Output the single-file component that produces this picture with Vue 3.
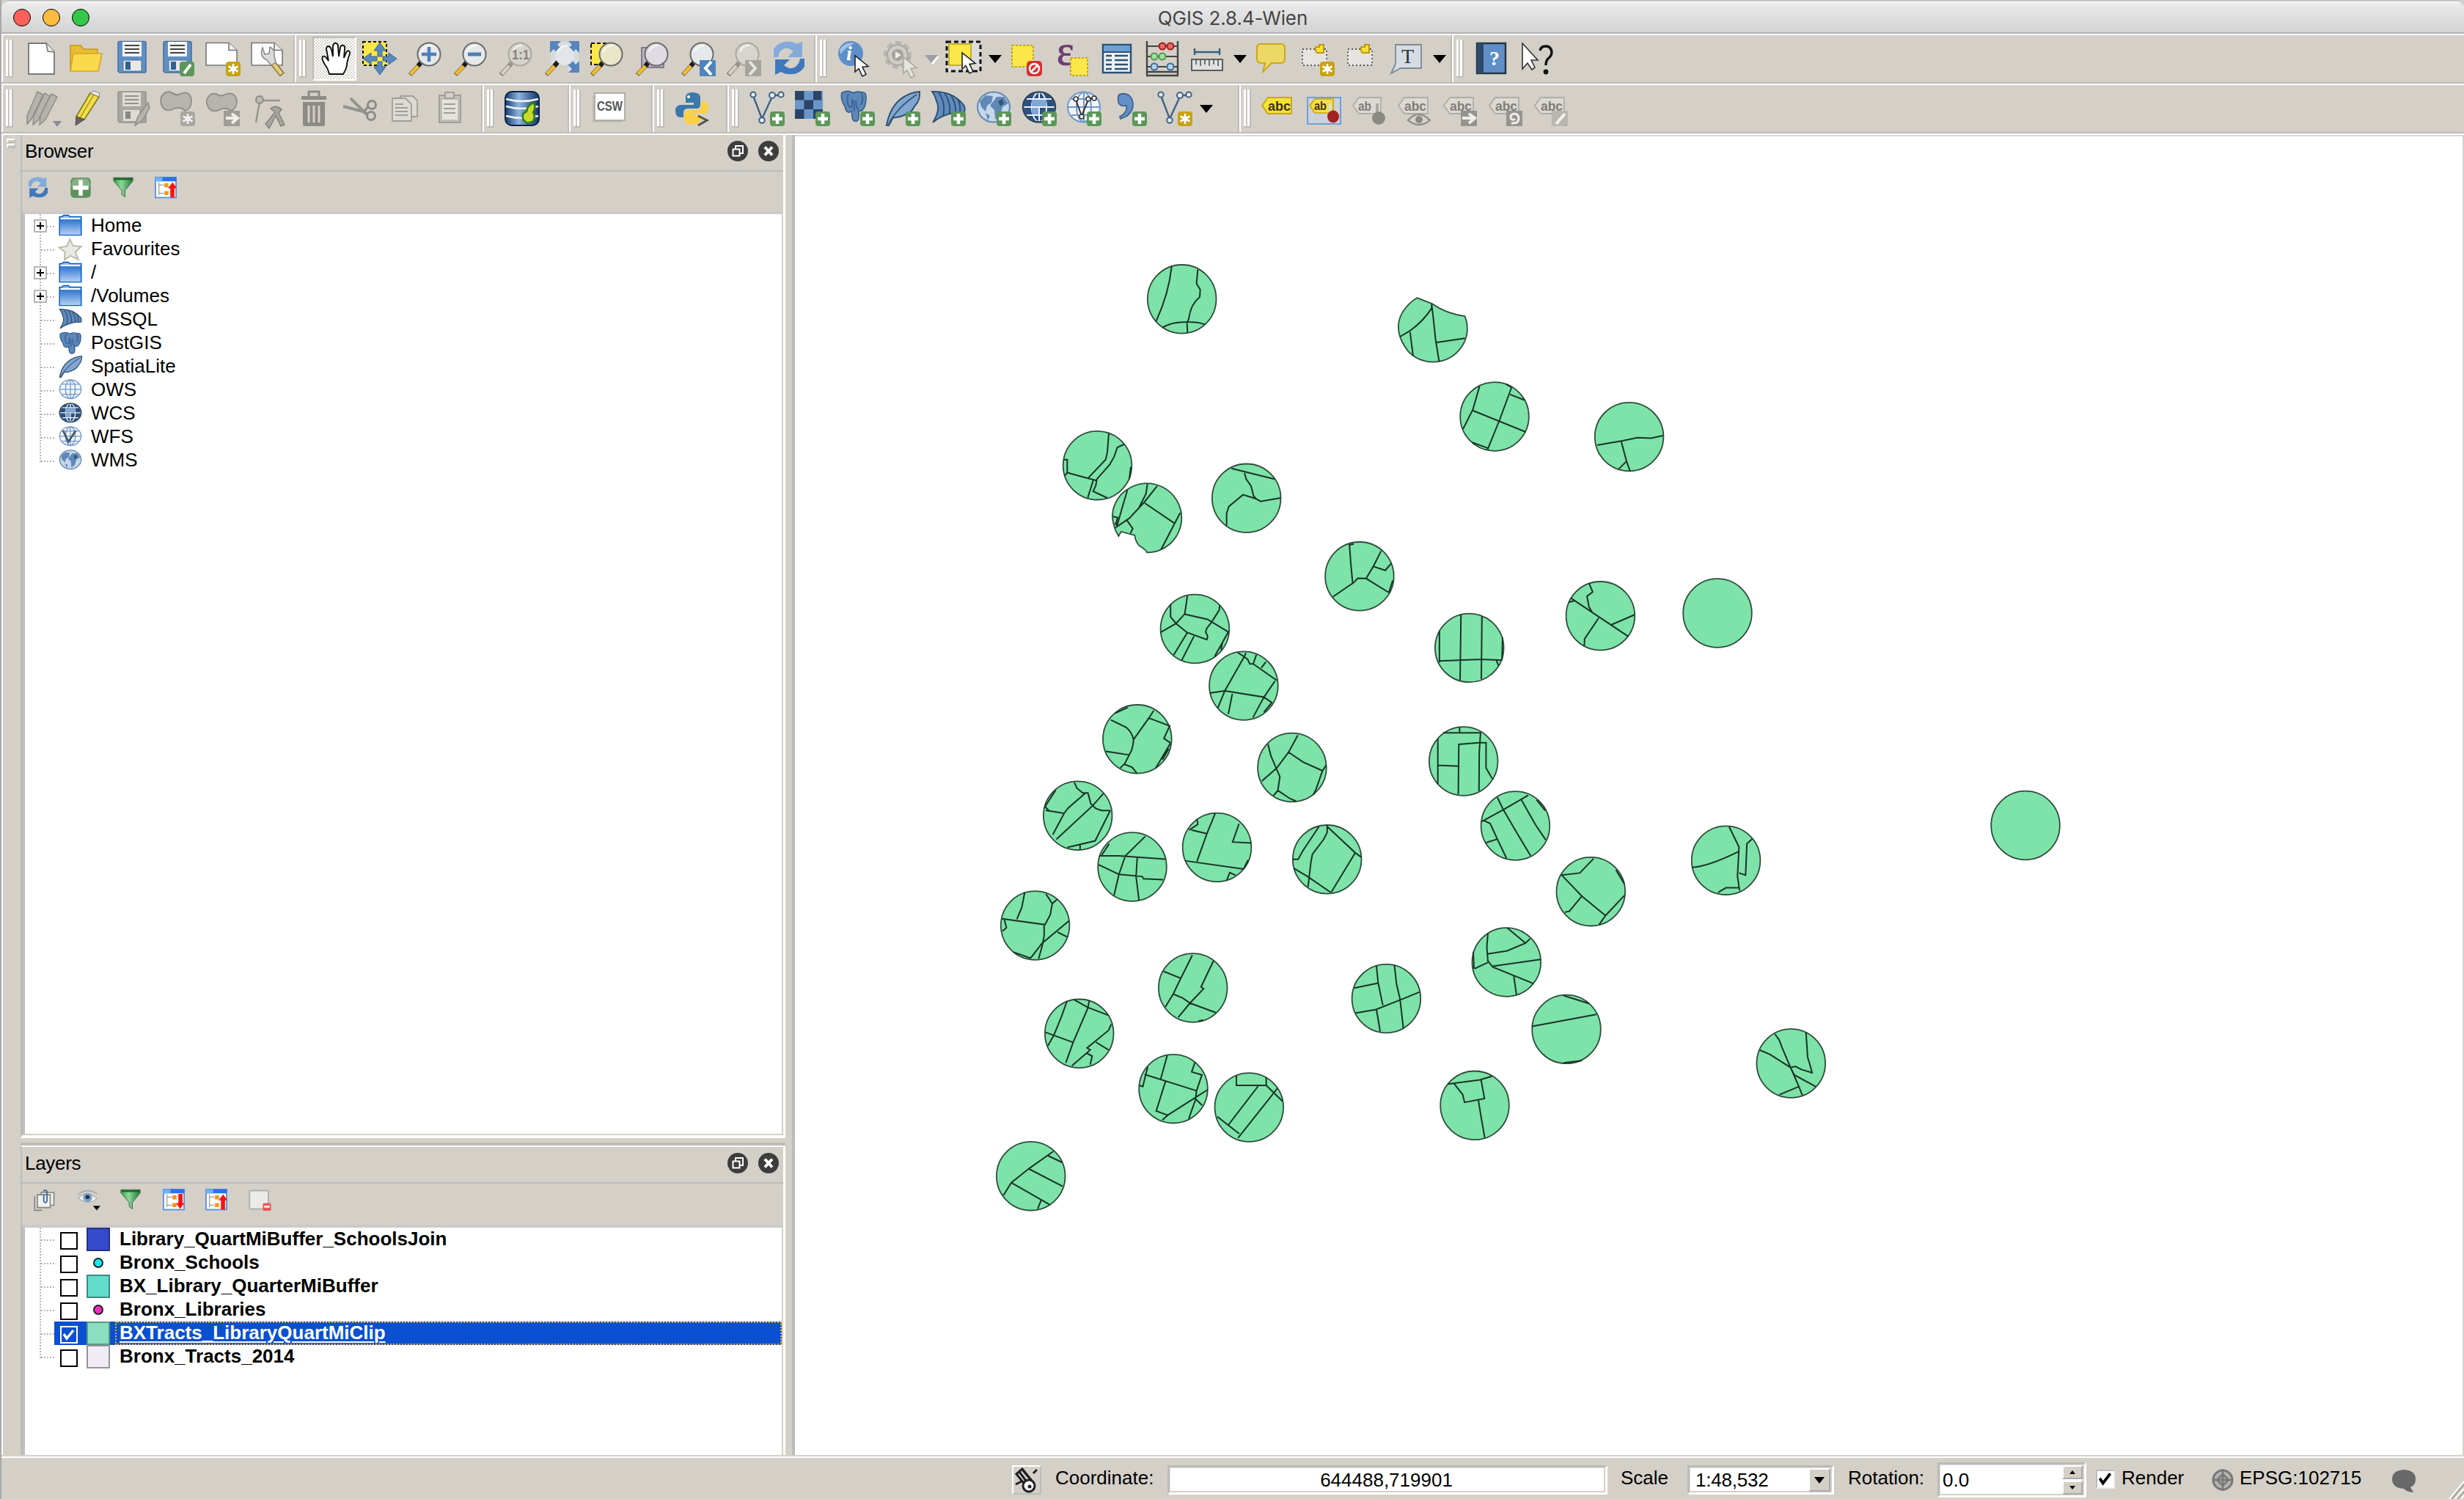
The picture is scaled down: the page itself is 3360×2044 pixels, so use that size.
<script setup>
const plus = '<rect x="28" y="28" width="20" height="20" rx="4" fill="#5c9658"/><path d="M38 31v14M31 38h14" stroke="#fff" stroke-width="4.5"/>'
const star = '<rect x="28" y="28" width="20" height="20" rx="4" fill="#c9a20c"/><path d="M38 31v14M31.5 34.5l13 7M31.5 41.5l13-7" stroke="#fff" stroke-width="2.6"/><circle cx="38" cy="38" r="3.6" fill="#fff"/>'
const grayStar = '<rect x="28" y="28" width="20" height="20" rx="4" fill="#a9a6a0"/><path d="M38 31v14M31.5 34.5l13 7M31.5 41.5l13-7" stroke="#eee" stroke-width="2.6"/><circle cx="38" cy="38" r="3.4" fill="#eee"/>'
const page = '<path d="M1 2.500h31l11 10v20.500h-42z" fill="#fff" stroke="#777" stroke-width="1.600"/><path d="M32 2.500v10h11" fill="#eee" stroke="#777" stroke-width="1.600"/>'
const floppy = '<path d="M5 3q0-2.500 2.500-2.500h33q2.500 0 2.500 2.500v38q0 2-2 2h-34l-2-2z" fill="#5f8fc6" stroke="#49709c" stroke-width="1.600"/><rect x="11" y="1" width="26" height="20" fill="#f4f4f4"/><path d="M14 6h20M14 11h20M14 16h20" stroke="#444" stroke-width="1.800"/><rect x="12" y="26" width="25" height="15" rx="1" fill="#e8e8e8" stroke="#49709c"/><rect x="15" y="28" width="7" height="11" fill="#2f6291"/>'
const grayFloppy = '<path d="M5 3q0-2 2-2h34q2 0 2 2v38q0 2-2 2h-34l-2-2z" fill="#aaa7a1" stroke="#95928c" stroke-width="1.600"/><rect x="11" y="2" width="25" height="19" fill="#dedbd5"/><path d="M14 7h19M14 12h19M14 17h19" stroke="#95928c" stroke-width="1.800"/><rect x="12" y="26" width="22" height="15" fill="#dedbd5"/><rect x="15" y="28" width="7" height="10" fill="#8a8782"/><path d="M46 16l-14 19-4 12 10-6 10-18z" fill="#b5b2ac" stroke="#8f8c86" stroke-width="1.500"/>'
const lens = (fill = '#e6e8ea', ring = '#6b6b6b', grip = '#f0bd2d', tip = '#1c1c1c') =>
  `<path d="M17 31L3 46" stroke="#6b5b2e" stroke-width="6" opacity=".8"/><path d="M17 31L4 45" stroke="${grip}" stroke-width="4.500"/><path d="M19 28l-5 6" stroke="${tip}" stroke-width="6"/><circle cx="29" cy="18" r="15.500" fill="${fill}" stroke="${ring}" stroke-width="2"/><path d="M19 15q3-9 13-9" fill="none" stroke="#fff" stroke-width="2" opacity=".8"/>`
const cursor = (x, y, fill = '#fff', line = '#222') => `<path transform="translate(${x} ${y})" d="M0 0v22l5-4.500 5 10.500 5-2.500-5-10 8-1z" fill="${fill}" stroke="${line}" stroke-width="1.600"/>`
const nodes = '<path d="M6 9L17 38 30 10M33 6h9" fill="none" stroke="#3f6286" stroke-width="2.400"/><g fill="#e8edf2" stroke="#3f6286" stroke-width="2"><circle cx="5" cy="5" r="3.600"/><circle cx="17" cy="40" r="3.800"/><circle cx="31" cy="6" r="4"/><circle cx="43" cy="5" r="3.600"/></g>'
const tag = '<path d="M1 20L9 9h32v22H9z" fill="#f5e13c" stroke="#c5a60c" stroke-width="1.800"/><text x="9" y="27" font-size="18" font-weight="bold" textLength="31" lengthAdjust="spacingAndGlyphs" fill="#3b3206">abc</text>'
const grayTag = '<path d="M1 20L9 9h32v22H9z" fill="#dcd9d3" stroke="#b0ada7" stroke-width="1.800"/><text x="9" y="27" font-size="18" font-weight="bold" textLength="30" lengthAdjust="spacingAndGlyphs" fill="#7f7c77">abc</text>'
const sync = (a, b) => `<path d="M3 22V11Q12-3 31 2l3 2 8-3v21H22l8-8Q20 6 13 13q-3 3-4 9z" fill="${a}"/><path d="M45 24v11Q36 49 17 44l-4-2-8 4V25h20l-8 8q10 8 17 1 4-4 5-10z" fill="${b}"/>`
const grid = '<g fill="none" stroke-width="2"><ellipse cx="24" cy="22" rx="10" ry="20"/><path d="M24 2v40M3 22h42M7 11h34M7 33h34"/><ellipse cx="24" cy="22" rx="22" ry="20.500"/></g>'
const sail = '<path d="M2 1Q30 0 45 19q3 5 1 10Q22 28 3 43q11-18 5-29Q6 6 2 1z" fill="#5e8abd" stroke="#2f4d70" stroke-width="1.800"/><path d="M11 2q10 14 6 33M19 3q9 13 7 29M28 6q7 12 6 24M37 11q4 8 3 18" fill="none" stroke="#2f4d70" stroke-width="1.800"/>'
const elephant = '<path d="M3 3Q12-2 20 3q6-3 13-1 8-1 7 9 0 12-6 18l-5 1v10q-1 5-5 5t-5-6l-1-9-4 2q-5-1-6-9Q1 13 3 3z" fill="#5b88bb" stroke="#3b5e88" stroke-width="1.800"/><path d="M13 4q-3 12 1 19l5 1V12M33 3q4 10-1 18M21 14q2 8 1 16M25 14q-1 10 4 15" fill="none" stroke="#3b5e88" stroke-width="1.800"/>'
const feather = '<path d="M2 47Q6 24 20 12 32 2 47 1q1 12-7 20-4 9-14 12-8 4-15 3L5 47z" fill="#80a7d3" stroke="#34516f" stroke-width="2"/><path d="M5 45Q16 23 43 5" fill="none" stroke="#34516f" stroke-width="1.600"/>'
const globeLand = '<ellipse cx="24" cy="22" rx="22" ry="20.500" fill="#c6d7ea" stroke="#6387ae" stroke-width="2"/><path d="M5 14l8-8 10 1-2 9-6 4-2 8-6-6zM28 8l10 0 6 9-8 5-3 12-7 5-1-13-6-6zM13 30l6 4-3 6z" fill="#6089b8"/><path d="M30 14l6-3 2 6-5 4z" fill="#35557a"/>'
const globeDark = `<ellipse cx="24" cy="22" rx="22" ry="20.500" fill="#2c4f7c"/><g stroke="#eef3f8">${grid}</g><path d="M14 12h20v9H14zM14 23h9v9h-9z" fill="#7fa6d4"/><ellipse cx="24" cy="22" rx="22" ry="20.500" fill="none" stroke="#2c4660" stroke-width="2.500"/>`
const globeLight = `<ellipse cx="24" cy="22" rx="22" ry="20.500" fill="#f2f6fb"/><g stroke="#7198c8">${grid}</g>`
const funnel = '<defs><linearGradient id="fg"><stop offset="0" stop-color="#2f9a48"/><stop offset=".4" stop-color="#8ed89a"/><stop offset="1" stop-color="#1e7a34"/></linearGradient></defs><path d="M3 2h42v7L28 30v14l-7-5v-9L3 9z" fill="url(#fg)" stroke="#4b6350" stroke-width="1.500"/><path d="M4 3h40v4H4z" fill="#176a2a"/>'
const treeWin = (arrow) => `<rect x="1.500" y="1.500" width="45" height="44" fill="#fff" stroke="#5e8fdc" stroke-width="3"/><path d="M1 1h46v9H1z" fill="#2a72ea"/><path d="M1 1h16v9H1z" fill="#6fb2f6"/><path d="M9 12v28M10 18h10M10 36h10" stroke="#aaa" stroke-width="2.500"/><path d="M21 14h9v9h-9zM21 31h9v9h-9z" fill="#f5951f"/>${arrow}`

const icons = {
  newDoc: '<path d="M7 3h24l11 12v30H7z" fill="#fff" stroke="#777" stroke-width="1.800"/><path d="M31 3l2 11 9 1" fill="#eee" stroke="#777" stroke-width="1.600"/>',
  folder: '<path d="M2 40V6h14l4 5h19v8" fill="#e9bd33" stroke="#c49a1f" stroke-width="1.600"/><path d="M2 41L6 17h39l-5 24z" fill="#fcd84c" stroke="#d1a728" stroke-width="1.600"/>',
  save: floppy,
  saveAs: floppy + '<rect x="27" y="28" width="20" height="20" rx="4" fill="#5c9658"/><path d="M42 32L33 44" stroke="#fff" stroke-width="4"/>',
  composer: page + star,
  composers: page + '<path d="M31 31l12 15" stroke="#8b7833" stroke-width="8"/><path d="M31 31l11 14" stroke="#e2cb7c" stroke-width="5"/><path d="M16 9q-5 12 6 17l6 7 6-4-2-9q1-9-6-12l-1 9-6 1z" fill="#dcdcdc" stroke="#888" stroke-width="1.500"/>',
  hand: '<path transform="translate(2 0)" d="M15 45Q13 37 9 32 4 24 6 21q3-2 8 6L11 11q0-4 3-4 3 1 4 5l2 9V7q1-5 4-4 3 0 3 5l1 13 2-12q1-4 4-3 3 1 2 5l-1 12 3-7q2-4 4-2 2 1 0 6-3 8-3 13-1 6-5 12z" fill="#fff" stroke="#111" stroke-width="1.900"/>',
  panSel: '<rect x="1" y="1" width="32" height="32" fill="#fbe848" stroke="#111" stroke-width="2" stroke-dasharray="4 3"/><g fill="#5b89bd" stroke="#3f658f"><path d="M24 2l8 11h-5v8h-6v-8h-5zM24 46l8-11h-5v-7h-6v7h-5zM1 24l11-8v5h8v6h-8v5zM47 24l-11-8v5h-8v6h8v5z"/></g>',
  zoomIn: lens() + '<path d="M29 8v20M19 18h20" stroke="#4d80b6" stroke-width="4.500"/>',
  zoomOut: lens() + '<path d="M20 18h18" stroke="#4d80b6" stroke-width="5"/>',
  zoomNative: lens('#d6d3cc', '#aaa79f', '#d5d2cb', '#99968f') + '<text x="18" y="25" font-size="19" font-weight="bold" textLength="24" lengthAdjust="spacingAndGlyphs" fill="#85827b">1:1</text>',
  zoomFull: '<path d="M9 1h38v40h-14V29H9z" fill="#d6dbe1"/><g fill="#5585bb"><path d="M8 0h15l-5 5 7 7-6 6-6-7-5 5zM48 0H33l5 5-7 7 6 6 6-7 5 5zM48 43H33l5-5-7-7 6-6 6 7 5-5z"/></g>' + lens('#e3e6e9').replace(/<circle[^>]*>/, '<circle cx="28" cy="20" r="13" fill="#e3e6e9"/>'),
  zoomSel: '<rect x="2" y="3" width="22" height="29" fill="#fbe848" stroke="#111" stroke-width="2" stroke-dasharray="5 3"/>' + lens('#e9e6c8'),
  zoomLayer: '<rect x="9" y="9" width="30" height="27" fill="#bdb3c2" stroke="#827888" stroke-width="2"/>' + lens('#dfdbe3'),
  zoomLast: lens() + '<rect x="26" y="26" width="22" height="22" fill="#4f84bd"/><path d="M42 28l-8 9 8 9" fill="none" stroke="#fff" stroke-width="4"/>',
  zoomNext: lens('#d8d5ce', '#aaa79f', '#d5d2cb', '#99968f') + '<rect x="26" y="26" width="22" height="22" fill="#a7a49e"/><path d="M32 28l8 9-8 9" fill="none" stroke="#e6e4df" stroke-width="4"/>',
  refresh: sync('#83abda', '#3f78bd'),
  identify: '<circle cx="18" cy="17" r="17" fill="#5d8fca"/><path d="M3 12Q10 0 24 3q-12 4-20 15z" fill="#a4c3e6"/><text x="12" y="26" font-size="28" font-style="italic" font-weight="bold" font-family="Liberation Serif" fill="#fff">i</text>' + cursor(24, 20),
  action: '<circle cx="20" cy="19" r="16" fill="none" stroke="#b9b6af" stroke-width="6" stroke-dasharray="8 4"/><circle cx="20" cy="19" r="14" fill="#cfccc5" stroke="#a9a69f" stroke-width="2"/><circle cx="20" cy="19" r="8" fill="#a5a29b"/><path d="M17 14l8 5-8 5z" fill="#eee"/>' + cursor(28, 22, '#e7e4de', '#aaa79f'),
  select: '<rect x="1" y="1" width="46" height="40" fill="#dcdcdc" stroke="#111" stroke-width="3" stroke-dasharray="6 4"/><rect x="4" y="4" width="30" height="29" fill="#fbe848" stroke="#b59c14" stroke-width="1.500"/>' + cursor(22, 16),
  deselect: '<rect x="3" y="6" width="29" height="29" fill="#fbe848" stroke="#c5a313" stroke-width="2" stroke-dasharray="3 2"/><rect x="23" y="27" width="21" height="21" rx="5" fill="#dc2f2f"/><circle cx="33.500" cy="37.500" r="6.500" fill="none" stroke="#fff" stroke-width="2.500"/><path d="M38 33l-9 9" stroke="#fff" stroke-width="2.500"/>',
  expr: '<text x="2" y="32" font-size="56" font-family="Liberation Serif" fill="#6f3d72" stroke="#6f3d72">ε</text><rect x="21" y="23" width="23" height="24" fill="#fbe848" stroke="#c5a313" stroke-width="2" stroke-dasharray="3 2"/>',
  table: '<rect x="4" y="5" width="38" height="38" fill="#eef2f6" stroke="#2c5273" stroke-width="2.500"/><path d="M4 5h38v10H4z" fill="#6da0d2" stroke="#2c5273" stroke-width="2"/><path d="M8 20h8M20 20h18M8 26h8M20 26h18M8 32h8M20 32h18M8 38h8M20 38h18" stroke="#2c5273" stroke-width="2.500"/>',
  abacus: '<path d="M2 0v46M44 0v46M1 42h44M1 47h44" stroke="#444" stroke-width="2.400"/><path d="M2 7h42M2 21h42M2 35h42" stroke="#444" stroke-width="2"/><g stroke-width="2"><g fill="#e56a6a" stroke="#a31d1d"><circle cx="23" cy="7" r="4.500"/><circle cx="34" cy="7" r="4.500"/></g><g fill="#a6dda6" stroke="#4c9a4c"><circle cx="12" cy="21" r="4.500"/><circle cx="23" cy="21" r="4.500"/></g><g fill="#b4d2ec" stroke="#3a6a95"><circle cx="12" cy="35" r="4.500"/><circle cx="34" cy="35" r="4.500"/></g></g>',
  measure: '<path d="M5 10v9M39 10v9M5 15h34" stroke="#31617f" stroke-width="2.400"/><rect x="1" y="25" width="42" height="15" fill="#dfe2e0" stroke="#5a5e5c" stroke-width="2"/><path d="M7 26v6M13 26v8M19 26v6M25 26v8M31 26v6M37 26v8" stroke="#555" stroke-width="1.600"/>',
  tip: '<path d="M7 4h29q5 0 5 6v14q0 6-6 6H23L11 42l3-12H9q-6 0-6-6V10q0-6 4-6z" fill="#ecd965" stroke="#c9a721" stroke-width="2"/>',
  newMark: '<rect x="4" y="11" width="33" height="22" fill="#e6e4e0" stroke="#555" stroke-width="1.800" stroke-dasharray="2 3"/><path d="M22 8h5V5h6v11h-9q-3-2-2-8z" fill="#fbe038" stroke="#bb980e" stroke-width="2"/>' + star,
  mark: '<rect x="4" y="11" width="33" height="22" fill="#e6e4e0" stroke="#555" stroke-width="1.800" stroke-dasharray="2 3"/><path d="M22 8h5V5h6v11h-9q-3-2-2-8z" fill="#fbe038" stroke="#bb980e" stroke-width="2"/>',
  annot: '<path d="M7 5h35v32H14L1 44l6-13z" fill="#d5dce4" stroke="#7f8993" stroke-width="1.800"/><text x="15" y="30" font-size="28" font-family="Liberation Serif" fill="#333">T</text>',
  help: '<rect x="4" y="3" width="39" height="41" fill="#5f8fc6" stroke="#25323f" stroke-width="2.400"/><path d="M4 3h9v41H4z" fill="#2d4a6b"/><text x="21" y="33" font-size="28" font-family="Liberation Serif" font-weight="bold" fill="#fff">?</text>',
  what: '<path d="M4 3v35l7-8 6 9 4-3-5-10h9z" fill="#fff" stroke="#333" stroke-width="1.600"/><path d="M28 13q1-6 8-6t8 8q0 5-5 9-3 3-3 9" fill="none" stroke="#111" stroke-width="3.400"/><circle cx="36" cy="42" r="3.400" fill="#111"/>',
  pencils: '<g stroke="#8f8c86" stroke-width="1.400" fill="#b6b3ad"><path d="M19 1l8 4L11 38 5 45l0-11z"/><path d="M29 3l7 4L20 40l-7 6 1-12z"/><path d="M38 4l8 4-16 31-8 7 1-12z"/></g><path d="M40 41h12l-6 8z" fill="#8e8c93"/>',
  pencil: '<path d="M29 3l12 5-20 31-11-4z" fill="#f0de4a" stroke="#8c7c1c" stroke-width="1.800"/><path d="M34 5L15 37" stroke="#b19c22" stroke-width="1.500"/><path d="M29 3l5-3 8 3-1 5z" fill="#e8e8e8" stroke="#888"/><path d="M10 35l11 4-12 8z" fill="#666" stroke="#444"/>',
  saveEdits: grayFloppy,
  addFeat: '<path d="M2 8q5-9 14-6 6 6 14 1 12-3 13 10 0 12-9 14-5-6-14-3-12 6-17-3-3-6-1-13z" fill="#b7b4ae" stroke="#8f8c86" stroke-width="1.800"/>' + grayStar,
  moveFeat: '<path d="M2 12q4-10 13-8 6 5 14 0 12-3 14 10-1 12-9 13-5-5-13-2-12 6-17-3-3-5-2-10z" fill="#b7b4ae" stroke="#8f8c86" stroke-width="1.800"/><rect x="25" y="27" width="22" height="21" fill="#a09d97"/><path d="M28 37h14M36 31l8 6-8 7" stroke="#f2f0ec" stroke-width="4" fill="none"/>',
  nodeTool: '<path d="M7 43L12 15M15 13h25" stroke="#97948e" stroke-width="2.400"/><circle cx="12" cy="12" r="5" fill="#bbb8b2" stroke="#8f8c86" stroke-width="2"/><path d="M20 45l13-16-6-5q7-6 15 1l-4 5 8 16-5 2-7-14-9 17z" fill="#a8a59f" stroke="#86837d" stroke-width="1.500"/>',
  trash: '<path d="M7 7h34v5H7z" fill="#8e8b85"/><path d="M17 7V1h14v6" fill="none" stroke="#8e8b85" stroke-width="3"/><path d="M9 15h30v31q0 2-3 2H12q-3 0-3-2z" fill="#8e8b85"/><path d="M17 20v23M24 20v23M31 20v23" stroke="#d4d0c8" stroke-width="3"/>',
  cut: '<path d="M2 21l31 8M12 10l22 22" stroke="#97948e" stroke-width="4"/><circle cx="41" cy="19" r="5.500" fill="none" stroke="#8e8b85" stroke-width="3"/><circle cx="40" cy="34" r="5.500" fill="none" stroke="#8e8b85" stroke-width="3"/><path d="M36 21l-6 8M30 29l6 3" stroke="#8e8b85" stroke-width="3"/>',
  copy: '<g fill="#dedbd5" stroke="#a19e98" stroke-width="1.800"><path d="M18 7h17l6 6v22H18z"/><path d="M7 10h18l8 8v23H7z"/></g><path d="M11 18h11M11 23h17M11 28h17M11 33h17" stroke="#a19e98" stroke-width="2"/>',
  paste: '<rect x="9" y="6" width="29" height="37" fill="#c4c1ba" stroke="#a19e98" stroke-width="2"/><rect x="12" y="11" width="23" height="29" fill="#e6e3de" stroke="#aaa"/><path d="M17 2h12v8H17z" fill="#d4d0c8" stroke="#a19e98" stroke-width="2"/><path d="M15 18h16M15 24h16M15 30h16" stroke="#a19e98" stroke-width="2"/>',
  db: '<defs><linearGradient id="db"><stop offset="0" stop-color="#153a6e"/><stop offset=".4" stop-color="#8db5de"/><stop offset="1" stop-color="#123263"/></linearGradient></defs><rect x="1" y="1" width="46" height="46" rx="9" fill="url(#db)" stroke="#0b2145" stroke-width="2"/><path d="M2 11q22 6 44 0M2 21q22 6 44 0M2 34q22 6 44 0" fill="none" stroke="#eef4fa" stroke-width="2.500"/><path d="M40 16q-9 3-10 12-8 3-4 12l5 4 7-2q5-5 1-13 4-5 1-13z" fill="#c8d92b" stroke="#2c7d22" stroke-width="2.500"/>',
  csw: '<rect x="2" y="7" width="40" height="36" fill="#c1beb7"/><rect x="5" y="3" width="41" height="37" fill="#fff" stroke="#a5a29c" stroke-width="1.600"/><text x="8" y="27" font-size="19" font-weight="bold" textLength="35" lengthAdjust="spacingAndGlyphs" fill="#555">CSW</text>',
  python: '<path d="M24 2q-10 0-9 8v6h11v3H9Q1 19 1 27q0 9 7 9h4v-6q0-6 6-6h12q5 0 5-6v-9q0-7-11-7z" fill="#3b78ab"/><circle cx="19" cy="8" r="2" fill="#fff"/><path d="M25 46q10 0 10-8v-5H24v-2h16q6-1 6-8 0-9-7-9h-3v6q0 6-6 6H19q-6 0-6 6v7q0 7 12 7z" fill="#fbd043"/><path d="M32 34l12 6-12 7" fill="none" stroke="#555" stroke-width="3"/>',
  addVector: nodes + plus,
  addRaster: '<g fill="#2a4467"><path d="M0 0h38v38H0z"/></g><path d="M12.500 0H25v12.500H12.500zM38 0H36V12h2zM0 12.500h12.500V25H0zM25 12.500h13V25H25zM12.500 25H25v13H12.500z" fill="#6a97cb"/>' + plus,
  addPg: `<g transform="scale(.9 .92)">${elephant}</g>` + plus, addSl: feather + plus, addMs: sail + plus,
  addWms: globeLand + plus, addWcs: globeDark + plus,
  addWfs: globeLight + '<path d="M13 12l8 22 9-22M33 10h6" fill="none" stroke="#333" stroke-width="2"/><g fill="#fff" stroke="#333" stroke-width="1.600"><circle cx="13" cy="11" r="3"/><circle cx="21" cy="35" r="3"/><circle cx="30" cy="11" r="3"/><circle cx="38" cy="10" r="3"/></g>' + plus,
  addCsv: '<path d="M10 5Q21 1 27 10q6 14-6 24l-9 4-1-3q11-6 9-15-9 2-11-5-1-6 1-10z" fill="#6290c6" stroke="#40648d" stroke-width="1.800"/>' + plus,
  newVector: nodes + star,
  label: tag,
  labelPin: '<rect x="1" y="9" width="45" height="36" fill="#cdd2d9" stroke="#6f9fd8" stroke-width="2"/><path d="M4 20l7-9h25v19H11z" fill="#f5e13c" stroke="#c5a60c" stroke-width="1.600"/><text x="10" y="26" font-size="17" font-weight="bold" textLength="17" lengthAdjust="spacingAndGlyphs" fill="#3b3206">ab</text><path d="M32 18v12" stroke="#ddd" stroke-width="4"/><ellipse cx="36" cy="35" rx="8" ry="8.500" fill="#a32121"/>',
  labelPinG: '<path d="M1 20L9 9h30v22H9z" fill="#dcd9d3" stroke="#b0ada7" stroke-width="1.800"/><text x="8" y="27" font-size="18" font-weight="bold" textLength="18" lengthAdjust="spacingAndGlyphs" fill="#7f7c77">ab</text><path d="M34 17v14" stroke="#aaa79f" stroke-width="4"/><ellipse cx="36" cy="37" rx="9" ry="9" fill="#8c8984"/>',
  labelShow: grayTag + '<path d="M14 40q14-16 30 0-15 12-30 0z" fill="#d6d3cd" stroke="#8c8984" stroke-width="2.200"/><circle cx="29" cy="39" r="5" fill="#8c8984"/>',
  labelMove: grayTag + '<rect x="24" y="27" width="22" height="21" fill="#97948e"/><path d="M26 37h15M35 31l8 6-8 7" stroke="#eee" stroke-width="4" fill="none"/>',
  labelTurn: grayTag + '<rect x="24" y="27" width="22" height="21" fill="#97948e"/><path d="M31 44q10 1 10-7-1-6-6-6-6 1-5 6 3 4 6 1" stroke="#eee" stroke-width="3" fill="none"/>',
  labelEdit: grayTag + '<rect x="24" y="27" width="22" height="21" fill="#b9b6b0"/><path d="M42 31L30 45" stroke="#f4f2ee" stroke-width="4"/>',
  add: '<rect x="2" y="2" width="44" height="44" rx="8" fill="#5c915c"/><path d="M4 14Q6 4 14 4h20q8 0 10 10v8H4z" fill="#86b086"/><path d="M24 7v34M7 24h34" stroke="#fff" stroke-width="9"/>',
  funnel,
  collapse: treeWin('<path d="M39 12l9 13h-5v20h-9V25h-5z" fill="#f11"/>'),
  expand: treeWin('<path d="M38 44l9-13h-4V11h-9v20h-5z" fill="#f11"/>'),
  group: '<g fill="#f1f1ef" stroke="#80837e" stroke-width="2.500"><path d="M2 16v31h16" fill="none"/><path d="M16 8h28v28H16z"/><path d="M8 13h28v28H8z"/></g><path d="M22 13v14q3 7 7 0V6q-4-7-8 0" fill="none" stroke="#3e68a5" stroke-width="3"/>',
  eye: '<path d="M2 20q20-18 42 1-20 17-42-1z" fill="#f0f0ee" stroke="#aaa" stroke-width="2"/><path d="M3 12Q22-3 44 11" fill="none" stroke="#aaa" stroke-width="2.500"/><circle cx="23" cy="19" r="10" fill="#7da0ca"/><circle cx="23" cy="18" r="4.500" fill="#20364f"/><path d="M35 37h16l-8 10z" fill="#000"/>',
  remove: '<rect x="2" y="4" width="41" height="40" rx="2" fill="#ebebe8" stroke="#b0afab" stroke-width="3"/><rect x="31" y="31" width="18" height="17" rx="3" fill="#e55"/><path d="M34 39h12" stroke="#fff" stroke-width="4"/>',
  dir: '<defs><linearGradient id="dg" x2="0" y2="1"><stop offset="0" stop-color="#2f74cf"/><stop offset="1" stop-color="#b3cff2"/></linearGradient></defs><path d="M2 4h5l3-3h10l3 3h23v40H2z" fill="#9dc0ee" stroke="#0a5fc4" stroke-width="2.600"/><path d="M4 8h40" stroke="#fff" stroke-width="3"/><path d="M3 10h42v33H3z" fill="url(#dg)"/>',
  fav: '<path d="M23 2l6 14 17 2-12 12 6 16-16-8-12 9 1-17L1 20l16-3z" fill="#e9eae2" stroke="#b9bba6" stroke-width="3"/>',
  mssql: sail, postgis: `<g transform="scale(1.130 1.040)">${elephant}</g>`, spatialite: feather, ows: globeLight, wcs: globeDark,
  wfs: globeLight + '<path d="M9 10l11 24L35 10" fill="none" stroke="#445566" stroke-width="4"/>', wms: globeLand,
}

const row1 = [
  { w: 400, items: ['newDoc', 'folder', 'save', 'saveAs', 'composer', 'composers'] },
  { w: 710, items: ['hand', 'panSel', 'zoomIn', 'zoomOut', 'zoomNative', 'zoomFull', 'zoomSel', 'zoomLayer', 'zoomLast', 'zoomNext', 'refresh'] },
  { w: 868, tight: true, items: ['identify', 'action', 'menuOff', 'select', 'menu', 'deselect', 'expr', 'table', 'abacus', 'measure', 'menu', 'tip', 'newMark', 'mark', 'annot', 'menu'] },
  { w: 0, items: ['help', 'what'] },
]
const row2 = [
  { w: 656, items: ['pencils', 'pencil', 'saveEdits', 'addFeat', 'moveFeat', 'nodeTool', 'trash', 'cut', 'copy', 'paste'] },
  { w: 118, items: ['db'] },
  { w: 114, items: ['csw'] },
  { w: 102, items: ['python'] },
  { w: 698, tight: true, items: ['addVector', 'addRaster', 'addPg', 'addSl', 'addMs', 'addWms', 'addWcs', 'addWfs', 'addCsv', 'newVector', 'menu'] },
  { w: 0, items: ['label', 'labelPin', 'labelPinG', 'labelShow', 'labelMove', 'labelTurn', 'labelEdit'] },
]

const browser = [
  ['Home', 'dir', true], ['Favourites', 'fav'], ['/', 'dir', true], ['/Volumes', 'dir', true],
  ['MSSQL', 'mssql'], ['PostGIS', 'postgis'], ['SpatiaLite', 'spatialite'], ['OWS', 'ows'],
  ['WCS', 'wcs'], ['WFS', 'wfs'], ['WMS', 'wms'],
].map(([name, icon, open]) => ({ name, icon, open }))

const layers = [
  { name: 'Library_QuartMiBuffer_SchoolsJoin', fill: '#354acc', edge: '#25307c' },
  { name: 'Bronx_Schools', dot: '#1ce6e6' },
  { name: 'BX_Library_QuarterMiBuffer', fill: '#62dccb', edge: '#3d8a80' },
  { name: 'Bronx_Libraries', dot: '#f02fc0' },
  { name: 'BXTracts_LibraryQuartMiClip', fill: '#89dfbf', edge: '#5b9a85', on: true },
  { name: 'Bronx_Tracts_2014', fill: '#f0ecf4', edge: '#959299' },
]

/* Quarter-mile buffers, map centre points */
const buffers = [
  [1611.700, 407.800], [1496.500, 634.700], [1699.700, 679.300], [2038, 568], [2221.600, 595.600], [1853.900, 785.800],
  [2003.700, 883.400], [2182.400, 839.800], [2342, 836], [1629.400, 857.500], [1695.900, 935.100], [1550.800, 1007.800],
  [1761.900, 1046.500], [1469.700, 1112.200], [1544, 1182], [1659.500, 1155.500], [1809.700, 1171.800], [1411.600, 1262],
  [1626.700, 1347], [1890.400, 1361.600], [1995.700, 1038], [2066.400, 1126], [2169.300, 1215.700], [2353.600, 1173.200],
  [2054.300, 1312], [2136, 1403.400], [2011, 1507.300], [2442.300, 1450], [2762, 1125.500], [1471.700, 1409.300],
  [1600, 1484.700], [1703.300, 1510], [1405.700, 1603.700],
]

/* Shoreline-clipped buffers and tract boundaries, grouped by map tile */
const tiles = [
  {
    at: 'translate(1340 340) scale(.33333)',
    areas: ['M592 982A142 142 0 0 1 814 1099A142 142 0 0 1 730 1228Q705 1240 672 1240Q668 1228 640 1212Q625 1195 622 1170L600 1164 566 1155 556 1173 544 1150Q520 1090 540 1045Q556 1005 592 982z'],
    lines: 'M773 70Q762 180 709 295M880 83L875 140 890 165 888 195Q850 225 843 285L836 300 838 340M736 320Q770 297 840 297Q880 297 910 307M516 753L510 830 503 860 430 937M343 913L465 946M332 860H346V913L337 925M430 1016L452 946M578 798L551 810 538 848 520 880 467 940 463 965 452 990 510 1017M606 890L600 940M592 985L570 1060 550 1130 540 1120M674 960L668 1000 640 1055M714 968L663 1032 600 1100 541 1140M663 1038L784 1120M808 1078L730 1228M588 1106L614 1142 604 1163M533 1093L552 1097 545 1125M1018 896L1193 940M1071 915L1078 940 1098 968 1108 1008 1120 1023M998 1130V1080L1007 1052 1065 1004 1117 1020 1137 1031 1218 1017',
  },
  {
    at: 'translate(1780 340) scale(.40816 .38265)',
    areas: ['M373 173L422 193Q470 230 533 238A116 124 0 0 1 540 300A115 123 0 0 1 344 364Q290 290 324 225Q345 190 373 173z'],
    lines: 'M317 311L350 290Q395 255 422 210V195L427 240 435 320 447 400M350 295L360 380M438 332L533 317M582 488L560 570 527 640M689 492L650 605 609 713M684 517L732 537M556 573L735 650M557 688L609 708M670 480L690 492M975 698L1060 682 1110 671 1155 673 1195 664M1055 682L1073 755 1085 790M1073 755L1047 783M147 1048L152 1120 158 1188M162 1050L148 1053M92 1238L162 1187 175 1172 203 1173 279 1223M253 1075L227 1130 203 1173M227 1130L267 1144 287 1119M292 1180L279 1223M448 1360V1472M520 1302L517 1535M590 1306L588 1532M448 1467L588 1461 655 1464M659 1383L657 1464M638 1464L645 1483M948 1190L960 1221 941 1236 948 1275 960 1296M880 1258L900 1252 887 1242M900 1252L1080 1380M980 1314L933 1388 932 1413M1022 1338L1100 1302',
  },
  {
    at: 'translate(1340 780) scale(.39541 .40816)',
    lines: 'M706 80L697 140 667 172 613 202M648 108V150L667 172 705 202 773 226 776 215 769 200 773 188 789 168 816 127 817 113M697 141L775 158 850 202M706 202L659 277M729 214L687 294M846 202L800 282M827 235L822 260M880 269L902 283 914 292 921 307 933 307 944 276M902 283L835 397 784 404M835 397L811 454M835 397L970 418 1008 364M933 307L1014 362M977 300L961 320M861 407L847 475M970 418L932 486M970 418L997 436 970 468M908 270L902 283M442 494L495 519Q514 535 520 558Q520 590 505 612L490 640 474 655M424 599L505 611M590 463L573 488 520 560M573 488L590 494 645 514 625 556 648 571M648 571L597 655M456 472L500 453M487 642L515 652 532 672M642 590L620 627M1087 545L1055 602 1014 655 963 698M984 575L994 614 1010 650 1025 684 1018 730 1003 747M1055 602L1105 635 1172 664M1185 645L1172 664 1150 725 1140 745M1018 730L1060 757 1080 765M316 703L325 722 345 738 363 738 373 774 390 790 410 797 440 797M355 738L295 788 281 806 242 877M218 796L281 806M416 740L380 780 254 893M440 797L388 898 292 920M252 728L215 784 228 796M336 912L336 926M561 883L492 948 470 1010 453 1080M402 948L470 948 630 959M400 978L470 1010 550 1017 555 1025 622 1028M533 955L529 1017 539 1096M436 908L411 945M802 806L773 875 739 967M720 862L773 874M739 826L742 843 712 862M884 841L862 902 926 905M701 965L900 992M872 1013L852 1004 842 1029M915 962L900 992M1188 846V870L1176 893 1137 943 1132 970 1122 1052M1160 850L1105 930 1088 960 1070 960M1188 850L1285 938 1305 952M1285 938L1202 1070M1074 990L1125 1020 1200 1070M145 1070L135 1120 118 1160M66 1158L215 1178 233 1145 240 1108 218 1075M240 1108L256 1094M212 1178V1215L205 1250 193 1292M298 1165L205 1240 165 1290M258 1203L292 1219M75 1162L82 1188 68 1200M107 1270L165 1290M723 1280L683 1358 657 1410 630 1453M624 1334L683 1357M796 1299L753 1386 762 1392 715 1440 674 1488M657 1410L690 1423 715 1440 804 1472M745 1500L760 1497M1358 1316L1364 1373 1380 1447M1282 1390L1364 1373M1420 1313L1427 1375 1439 1425 1451 1525M1287 1473L1355 1462 1439 1430 1507 1403M1358 1462L1371 1535',
  },
  {
    at: 'translate(1900 900) scale(.35714 .42088)',
    lines: 'M170 256V402M190 236H333L328 300 327 425M253 218V236M248 435L250 273 327 268H354V350L378 385M170 341L250 344M397 445L420 485 470 558 524 634M338 523L420 485 515 438M346 520L370 530 397 580 410 603 432 642M353 592L398 580M489 453L543 534 582 583M547 453L580 488M765 643L712 690 643 697 720 765 810 828M720 765L672 814 655 817M882 763L810 828 786 857M850 680L882 725M1282 540L1320 606 1314 700 1322 747M1140 672Q1200 670 1320 620M1370 580L1350 595 1345 697 1320 690M1320 738H1270L1240 753M361 886L357 930 361 975 380 995 535 1048M361 952L435 942 505 917 522 903M435 868L505 917M310 1000L361 980M305 945L308 1000M380 992L562 970M460 1025L470 1083M530 1187L775 1148M650 1087L748 1113M650 1305L720 1298M208 1374L330 1360 378 1348M230 1370L265 1408 272 1433 348 1421 335 1360M325 1427L335 1480 349 1548',
  },
  {
    at: 'translate(2385 1390) scale(.33333)',
    lines: 'M106 60L124 85 137 120 170 197 204 275 218 310M45 126L85 143 170 197 190 192 215 205 258 218 252 195 240 155 233 52M170 197L185 227 273 275M204 275L125 308',
  },
  {
    at: 'translate(1340 1200) scale(.33333)',
    lines: 'M345 495L322 560 292 633 267 678M257 623L370 664M436 494L430 525 370 664 340 748M375 490L430 521 514 553M526 590L515 615 427 687 440 695 365 760M463 663L515 695M425 708L448 720 440 755M755 718L728 815M662 795L875 862 897 797 855 785 868 747M749 820L710 945 757 962 870 890 920 858M875 862L870 900 843 977M757 962L735 982M675 765L655 845 642 840M870 895L898 922M1038 800V840H1160V808M1127 843L1005 1002M1205 853L1045 1055M960 968L1050 1038M1160 840L1227 905M289 1110L190 1180 117 1238 85 1290M268 1128L325 1155M190 1182L327 1253M117 1238L273 1327M240 1308L225 1345',
  },
]
</script>

<template>
  <div class="window">
    <div class="titlebar">
      <div class="lights"><i class="red"></i><i class="amber"></i><i class="green"></i></div>
      <span class="title">QGIS 2.8.4-Wien</span>
    </div>

    <div v-for="(row, r) in [row1, row2]" :key="r" class="toolrow">
      <div v-for="(g, n) in row" :key="n" class="group" :class="{ tight: g.tight }" :style="g.w ? { width: g.w + 'px' } : { flex: 1 }">
        <i class="handle"></i>
        <template v-for="(name, k) in g.items" :key="k">
          <i v-if="name.startsWith('menu')" class="menu" :class="{ off: name === 'menuOff' }"></i>
          <span v-else class="tool" :class="{ pressed: name === 'hand' }">
            <svg viewBox="0 0 48 48" v-html="icons[name]"></svg>
          </span>
        </template>
      </div>
    </div>

    <div class="main">
      <div class="gutter"><i></i><i></i></div>
      <div class="docks">
        <section class="dock browser">
          <header>
            <h2>Browser</h2>
            <svg class="dockbtn" viewBox="0 0 28 28"><circle cx="14" cy="14" r="14" fill="#3d3d3d" /><path d="M11 11V7h10v10h-4M7.500 11.500h9v9h-9z" fill="none" stroke="#fff" stroke-width="2" /></svg>
            <svg class="dockbtn" viewBox="0 0 28 28"><circle cx="14" cy="14" r="14" fill="#3d3d3d" /><path d="M9 8.500l10 11M19 8.500l-10 11" stroke="#fff" stroke-width="4" /></svg>
          </header>
          <div class="mini">
            <svg v-for="i in ['refresh', 'add', 'funnel', 'collapse']" :key="i" viewBox="0 0 48 48" v-html="icons[i]"></svg>
          </div>
          <div class="tree">
            <div v-for="(b, n) in browser" :key="b.name" class="node">
              <span class="branch" :class="{ last: n === browser.length - 1 }"><i v-if="b.open" class="plus"></i></span>
              <svg class="nodeicon" viewBox="0 0 48 48" preserveAspectRatio="none" v-html="icons[b.icon]"></svg>
              <span class="label">{{ b.name }}</span>
            </div>
          </div>
        </section>

        <div class="splitter"></div>

        <section class="dock layers">
          <header>
            <h2>Layers</h2>
            <svg class="dockbtn" viewBox="0 0 28 28"><circle cx="14" cy="14" r="14" fill="#3d3d3d" /><path d="M11 11V7h10v10h-4M7.500 11.500h9v9h-9z" fill="none" stroke="#fff" stroke-width="2" /></svg>
            <svg class="dockbtn" viewBox="0 0 28 28"><circle cx="14" cy="14" r="14" fill="#3d3d3d" /><path d="M9 8.500l10 11M19 8.500l-10 11" stroke="#fff" stroke-width="4" /></svg>
          </header>
          <div class="mini">
            <svg v-for="i in ['group', 'eye', 'funnel', 'expand', 'collapse', 'remove']" :key="i" viewBox="0 0 48 48" v-html="icons[i]"></svg>
          </div>
          <div class="tree">
            <div v-for="(l, n) in layers" :key="l.name" class="node">
              <span class="branch short" :class="{ last: n === layers.length - 1 }"></span>
              <div class="entry" :class="{ selected: l.on }">
                <span class="check"><svg v-if="l.on" viewBox="0 0 20 20"><path d="M3 9l4 6L16 4" fill="none" stroke="#fff" stroke-width="3.500" /></svg></span>
                <span v-if="l.fill" class="swatch" :style="{ background: l.fill, borderColor: l.edge }"></span>
                <span v-else class="swatch point"><i :style="{ background: l.dot }"></i></span>
                <span class="name">{{ l.name }}</span>
              </div>
            </div>
          </div>
        </section>
      </div>

      <div class="canvas">
        <svg viewBox="1084 186 2274 1798">
          <circle v-for="(b, n) in buffers" :key="n" :cx="b[0]" :cy="b[1]" r="46.800" class="area" />
          <g v-for="t in tiles" :key="t.at" :transform="t.at">
            <path v-for="a in t.areas" :key="a" :d="a" class="area" />
            <path :d="t.lines" class="line" />
          </g>
        </svg>
      </div>
    </div>

    <footer class="status">
      <span class="toggle"><svg viewBox="0 0 36 36"><path d="M4 10L12 3l13 16-8 7z" fill="#ddd" stroke="#222" stroke-width="3" /><path d="M8 7l12 16M3 24l8-4M27 9l5-5M12 4l10 12" stroke="#222" stroke-width="3" /><circle cx="21" cy="26" r="8" fill="#fff" stroke="#222" stroke-width="3" /><circle cx="22" cy="27" r="2.500" fill="#222" /></svg></span>
      <span class="t coord">Coordinate:</span>
      <span class="field coordfield">644488,719901</span>
      <span class="t scale">Scale</span>
      <span class="field combo">1:48,532<i class="drop"></i></span>
      <span class="t rot">Rotation:</span>
      <span class="field spin">0.0<span class="steps"><i class="up"></i><i class="down"></i></span></span>
      <span class="render"><svg viewBox="0 0 20 20"><path d="M3 9l4 6L16 3" fill="none" stroke="#000" stroke-width="3.500" /></svg></span>
      <span class="t rlabel">Render</span>
      <svg class="crs" viewBox="0 0 32 32"><circle cx="16" cy="16" r="13" fill="#b5b3ae" stroke="#777" stroke-width="3" /><path d="M16 1v30M2 16h28M16 8l8 8-8 8-8-8z" fill="none" stroke="#777" stroke-width="2.500" /></svg>
      <span class="t epsg">EPSG:102715</span>
      <svg class="msg" viewBox="0 0 34 32"><path d="M17 0Q33 1 33 13q0 8-7 11l4 7Q20 30 17 26 1 25 1 13 1 1 17 0z" fill="#686868" /></svg>
      <svg class="grip" viewBox="0 0 20 40"><path d="M0 40L20 16M8 40L20 26M16 40L20 35" stroke="#fff" stroke-width="2" /><path d="M3 40L20 20M11 40L20 30" stroke="#a5a29c" stroke-width="2" /></svg>
    </footer>
  </div>
</template>

<style>
body { margin: 0; background: #d4d0c8; }
</style>

<style scoped>
* { box-sizing: border-box; }
.window {
  width: 3360px; height: 2044px; overflow: hidden; display: flex; flex-direction: column;
  background: #d4d0c8; border-left: 2px solid #a9a9a9; color: #000;
  font: 26px/32px "Liberation Sans", Arial, sans-serif;
}
svg { display: block; overflow: visible; }
.titlebar {
  height: 46px; flex: none; display: flex; align-items: center; justify-content: center; position: relative;
  border-top: 2px solid #c6c6c6; border-bottom: 2px solid #b1b1b1; border-radius: 10px 10px 0 0;
  background: linear-gradient(#f8f8f8 0 2px, #ebebeb 2px, #d3d3d3);
}
.lights { position: absolute; left: 16px; top: 10px; display: flex; gap: 16px; }
.lights i { width: 24px; height: 24px; border-radius: 50%; border: 1px solid; }
.red { background: #fc605b; border-color: #df4744; }
.amber { background: #fdbc40; border-color: #de9f34; }
.green { background: #34c749; border-color: #27aa35; }
.title { font: 26px/38px Inter, "Liberation Sans", sans-serif; color: #444; letter-spacing: -.1px; padding-top: 3px; }

.toolrow { height: 68px; flex: none; display: flex; border-top: 2px solid #fff; border-bottom: 2px solid #bdbcba; }
.group { display: flex; align-items: center; gap: 14px; flex: none; padding-left: 6px; border-right: 2px solid #bdbcba; box-shadow: inset 2px 0 #fff; }
.group.tight { gap: 13.8px; }
.group:last-child { border-right: 0; }
.handle { width: 10px; height: 52px; flex: none; border: solid #bdbcba; border-width: 0 2px 2px 0; background: linear-gradient(90deg, #fff 0 3px, #bdbcba 3px 4px, #d4d0c8 4px 5px, #fff 5px); }
.tool { width: 48px; height: 48px; flex: none; position: relative; }
.tool svg { width: 48px; height: 48px; position: relative; font-family: "Liberation Sans", sans-serif; }
.pressed::before {
  content: ""; position: absolute; inset: -6px; border: 2px solid; border-color: #bdbcba #fff #fff #bdbcba;
  background: repeating-conic-gradient(#fff 0 25%, #d9d6cf 0 50%) 0 0 / 4px 4px;
}
.menu { width: 11px; flex: none; position: relative; height: 11px; }
.menu::before { content: ""; position: absolute; left: -4px; border: solid transparent; border-width: 11px 9px 0; border-top-color: #000; }
.menu.off::before { border-top-color: #a09ea3; filter: drop-shadow(2px 2px #fff); }

.main { height: 1804px; flex: none; display: flex; border-top: 2px solid #fff; }
.gutter { width: 26px; border-left: 2px solid #fff; padding: 5px 0 0 5px; display: flex; flex-direction: column; gap: 1px; }
.gutter i { width: 12px; height: 6px; border: 2px solid; border-color: #fff #bdbcba #bdbcba #fff; }
.docks { width: 1056px; display: flex; flex-direction: column; border-right: 4px solid #bdbcba; padding-right: 9px; }
.dock { border-left: 2px solid #bdbcba; border-right: 3px solid #fff; display: flex; flex-direction: column; }
.browser { height: 1368px; flex: none; border-bottom: 4px solid #fff; }
.splitter { height: 10px; flex: none; border-bottom: 4px solid #bdbcba; }
.layers { flex: 1; border-top: 2px solid #fff; }
.dock header { height: 50px; flex: none; display: flex; align-items: center; border-bottom: 2px solid #bdbcba; padding: 0 6px 4px 4px; gap: 14px; }
.dock h2 { margin: 0 auto 0 0; font-size: 26px; font-weight: 400; letter-spacing: -.3px; }
.dockbtn { width: 28px; height: 28px; }
.mini { height: 54px; flex: none; display: flex; gap: 28px; padding: 7px 0 0 7px; }
.mini svg { width: 30px; height: 30px; }
.layers .mini { height: 56px; padding-left: 16px; gap: 28.600px; }
.tree { flex: 1; background: #fff; border: solid #c0bfbd; border-width: 4px 2px 2px 4px; border-color: #cbcac8 #d4d0c8 #d4d0c8 #c0bfbd; }
.node { height: 32px; display: flex; align-items: center; white-space: nowrap; }
.branch { width: 46px; height: 32px; position: relative; flex: none; background: repeating-linear-gradient(#b5b5b5 0 2px, #fff 2px 4px) 20px 0 / 2px 100% no-repeat, repeating-linear-gradient(90deg, #b5b5b5 0 2px, #fff 2px 4px) 22px 16px / 18px 2px no-repeat; }
.branch.short { width: 40px; }
.branch.last { background-size: 2px 18px, 18px 2px; }
.plus { position: absolute; left: 12px; top: 7px; width: 18px; height: 18px; border: 2px solid #b5b5b5; background: linear-gradient(#000, #000) 50% 50% / 10px 2px no-repeat, linear-gradient(#000, #000) 50% 50% / 2px 10px no-repeat, #fff; }
.nodeicon { width: 32px; height: 30px; flex: none; }
.label { margin: 0 0 2px 12px; }
.entry { flex: 1; height: 32px; display: flex; align-items: center; padding-left: 8px; font-weight: 700; }
.selected { background: #0a50d0; color: #fff; }
.check { width: 24px; height: 24px; border: 2px solid #000; margin: 4px 12px 0 0; }
.selected .check { border-color: #fff; }
.swatch { width: 32px; height: 32px; border: 2px solid; display: flex; align-items: center; justify-content: center; }
.point { border: 0; }
.point i { width: 14px; height: 14px; border-radius: 50%; border: 2px solid #222; }
.name { height: 32px; line-height: 30px; margin-left: 7px; padding-left: 6px; flex: 1; }
.selected .name { outline: 2px dotted #e0a94a; outline-offset: -2px; text-decoration: underline; text-decoration-thickness: 2px; text-underline-offset: 3px; }

.canvas { flex: 1; background: #fff; margin-right: 2px; box-shadow: inset 0 2px #d9d9d7; }
.canvas svg { width: 2274px; height: 1798px; margin-top: 2px; overflow: hidden; }
.area { fill: #7de3a9; stroke: #2d4d3b; stroke-width: 1.800px; vector-effect: non-scaling-stroke; }
.line { fill: none; stroke: #1a3326; stroke-width: 2px; vector-effect: non-scaling-stroke; }

.status { flex: 1; display: flex; align-items: flex-start; border-top: 2px solid #fff; padding-left: 1378px; white-space: nowrap; position: relative; box-shadow: 0 -2px #d4d0c8; }
.toggle { width: 40px; height: 40px; margin-top: 10px; border: 2px solid; border-color: #fff #bdbcba #bdbcba #fff; flex: none; }
.toggle svg { width: 36px; height: 36px; }
.t { line-height: 32px; margin-top: 11px; flex: none; }
.coord { width: 153px; margin-left: 19px; }
.field { background: #fff; height: 40px; margin-top: 10px; border: 3px solid; border-color: #bdbcba #fff #fff #bdbcba; line-height: 34px; display: flex; flex: none; box-shadow: inset 1px 1px #e0dedb, inset -2px -2px #d4d0c8; }
.coordfield { width: 600px; justify-content: center; padding-right: 3px; }
.scale { width: 91px; margin-left: 18px; }
.combo { width: 200px; padding-left: 8px; justify-content: space-between; letter-spacing: -.2px; }
.drop { width: 30px; height: 32px; margin: 1px 2px 0 0; background: #d4d0c8; border: 2px solid; border-color: #fff #aaa #aaa #fff; display: flex; align-items: center; justify-content: center; }
.drop::before { content: ""; border: solid transparent; border-width: 9px 7px 0; border-top-color: #000; }
.rot { width: 122px; margin-left: 19px; }
.spin { width: 203px; height: 48px; margin-top: 6px; padding-left: 4px; line-height: 42px; justify-content: space-between; }
.steps { display: flex; flex-direction: column; gap: 2px; padding: 1px 2px 0 0; }
.steps i { width: 28px; height: 19px; background: #d4d0c8; border: 2px solid; border-color: #fff #aaa #aaa #fff; display: flex; align-items: center; justify-content: center; }
.steps i::before { content: ""; border: solid transparent; border-width: 0 4px 5px; border-bottom-color: #000; }
.steps .down::before { border-width: 5px 4px 0; border-top-color: #000; }
.render { width: 26px; height: 26px; margin: 16px 0 0 13px; background: #fff; border: 2px solid; border-color: #bdbcba #eee #eee #bdbcba; flex: none; }
.rlabel { width: 122px; margin-left: 9px; }
.crs { width: 32px; height: 32px; margin-top: 14px; flex: none; }
.epsg { margin-left: 7px; width: 207px; }
.msg { width: 34px; height: 32px; margin-top: 16px; flex: none; }
.grip { position: absolute; right: 0; bottom: 0; width: 20px; height: 40px; }
</style>
